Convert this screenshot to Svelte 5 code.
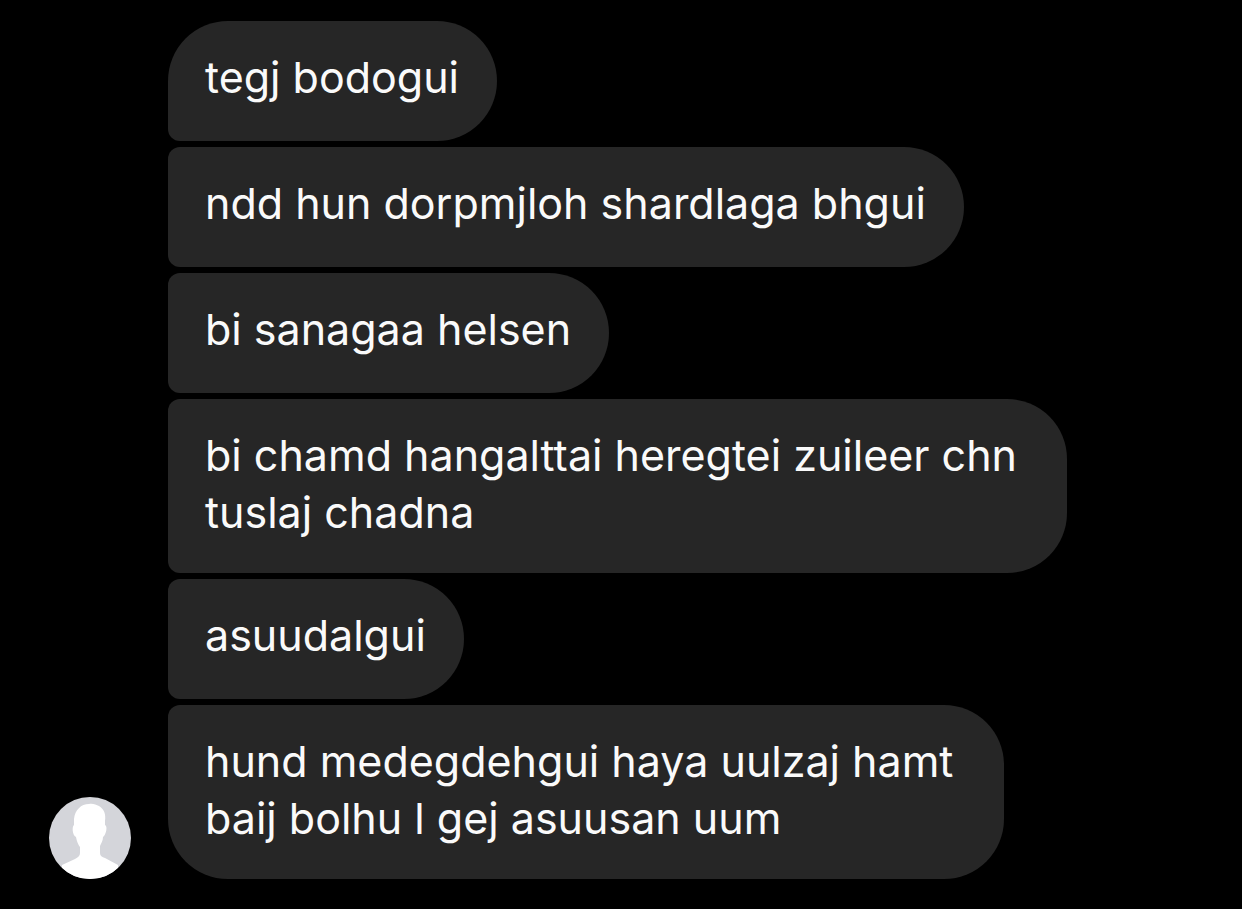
<script>
  let messages = [
    'tegj bodogui',
    'ndd hun dorpmjloh shardlaga bhgui',
    'bi sanagaa helsen',
    'bi chamd hangalttai heregtei zuileer chn \ntuslaj chadna',
    'asuudalgui',
    'hund medegdehgui haya uulzaj hamt \nbaij bolhu l gej asuusan uum'
  ];
</script>

<main class="chat">
  <svg class="avatar" viewBox="0 0 82 82" role="img" aria-label="Profile picture">
    <defs>
      <clipPath id="avatar-circle"><circle cx="41" cy="41" r="41" /></clipPath>
    </defs>
    <g clip-path="url(#avatar-circle)">
      <rect width="82" height="82" fill="#d4d5da" />
      <path
        fill="#fff"
        d="M40 7C44 6 47 8 50 9C55 12 57 17 56 24L56 28C59 29 57 38 54 40C54 44 52 46 51 49V56C51 59 53 60 56 61L69 68V82H13V68L26 62C29 60 31 59 31 56V50C29 47 28 45 27 40C23 38 23 29 25 28L25 22C26 13 32 7 40 7Z"
      />
    </g>
  </svg>
  <div class="messages">
    {#each messages as message}
      <p class="bubble">{message}</p>
    {/each}
  </div>
</main>

<style>
  :global(body) {
    background: #000;
  }
  .chat {
    display: flex;
    align-items: flex-end;
    gap: 37px;
    padding: 21px 120px 30px 49px;
    font-family: Inter, sans-serif;
  }
  .avatar {
    flex: none;
    width: 82px;
    height: 82px;
  }
  .messages {
    display: flex;
    flex-direction: column;
    align-items: flex-start;
    gap: 6px;
    min-width: 0;
  }
  .bubble {
    box-sizing: border-box;
    min-height: 120px;
    margin: 0;
    padding: 28px 38px 32px 37px;
    border-radius: 12px 60px 60px 12px;
    background: #262626;
    color: #fafafa;
    font-size: 43px;
    line-height: 57px;
    white-space: break-spaces;
  }
  .bubble:first-child {
    border-top-left-radius: 60px;
  }
  .bubble:last-child {
    border-bottom-left-radius: 60px;
  }
</style>
